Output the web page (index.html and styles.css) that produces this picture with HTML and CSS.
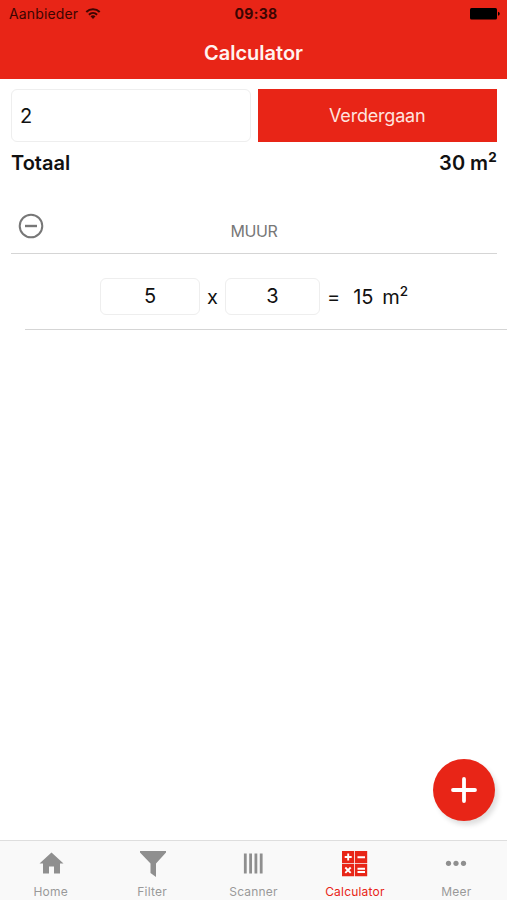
FILE: index.html
```html
<!DOCTYPE html>
<html lang="nl">
<head>
<meta charset="utf-8">
<title>Calculator</title>
<link rel="stylesheet" href="styles.css">
</head>
<body>
<div class="app">
  <header class="header">
    <div class="status">
      <div class="carrier"><span>Aanbieder</span>
        <svg width="16" height="12" viewBox="0 0 16 12" fill="none" stroke="currentColor" stroke-width="2"><path d="M1.300 4C5 .300 11 .300 14.700 4M3.900 6.700C6.300 4.500 9.700 4.500 12.100 6.700"/><path d="M5.500 8.300Q8 6.400 10.500 8.300L8 11Z" fill="currentColor" stroke="none"/></svg>
      </div>
      <span class="time">09:38</span>
      <svg class="battery" width="30" height="12" viewBox="0 0 30 12"><rect width="27" height="11.500" rx="1.500"/><path d="M28 3.700Q29.800 4.200 29.800 5.750T28 7.800Z"/></svg>
    </div>
    <h1 class="title">Calculator</h1>
  </header>
  <main class="content">
    <div class="entry">
      <div class="field name">2</div>
      <button class="button">Verdergaan</button>
    </div>
    <div class="total"><span class="total-label">Totaal</span><span class="total-value">30 m<sup>2</sup></span></div>
    <section class="group">
      <div class="group-head">
        <svg class="minus" width="26" height="26" viewBox="0 0 26 26" fill="none" stroke="#777" stroke-width="2"><circle cx="13" cy="13" r="11.300"/><path d="M7 13h12" stroke-width="2.400"/></svg>
        <span class="group-name">MUUR</span>
      </div>
      <div class="measure">
        <div class="field width">5</div>
        <span class="times">x</span>
        <div class="field height">3</div>
        <span class="equals">=</span>
        <span class="area">15 m<sup>2</sup></span>
      </div>
    </section>
    <button class="fab" aria-label="Toevoegen"><svg width="26" height="26" viewBox="0 0 26 26" stroke="#fff" stroke-width="3.800" stroke-linecap="round"><path d="M13 2v22M2 13h22"/></svg></button>
  </main>
  <nav class="tabs">
    <div class="tab"><svg width="28" height="28" viewBox="0 0 28 28"><path d="M14.500 2.500L26.500 13.500H23V23.500H17V16.500H12V23.500H6V13.500H2.500Z"/></svg><span>Home</span></div>
    <div class="tab"><svg width="28" height="28" viewBox="0 0 28 28"><path d="M2 1H28V2.500L18 13.500V27L12.500 23V13.500L2 2.500Z"/></svg><span>Filter</span></div>
    <div class="tab"><svg width="28" height="28" viewBox="0 0 28 28"><path d="M4.900 3.500h2.800v20H4.900zM10.200 3.500h2.800v20h-2.800zM15.500 3.500h2.800v20h-2.800zM20.800 3.500h2.800v20h-2.800z"/></svg><span>Scanner</span></div>
    <div class="tab active"><svg width="28" height="28" viewBox="0 0 28 28"><path d="M1 1h12.200v12.200H1zM14 1h12.200v12.200H14zM1 14h12.200v12.200H1zM14 14h12.200v12.200H14z"/><path d="M3.700 7h7M7.200 3.500v7M16.500 7.200h7.500M4.300 17.500l5.400 5.400M9.700 17.500l-5.400 5.400M16.500 18.700h7.500M16.500 22h7.500" stroke="#fff" stroke-width="1.900"/></svg><span>Calculator</span></div>
    <div class="tab"><svg width="28" height="28" viewBox="0 0 28 28"><circle cx="6.500" cy="13.300" r="2.600"/><circle cx="14" cy="13.300" r="2.600"/><circle cx="21.500" cy="13.300" r="2.600"/></svg><span>Meer</span></div>
  </nav>
</div>
</body>
</html>
```
FILE: styles.css
```css
* { box-sizing: border-box; }
body { margin: 0; font-family: Inter, "Liberation Sans", sans-serif; color: #111; background: #fff; }
.app { display: flex; flex-direction: column; height: 900px; overflow: hidden; }
.header { height: 79px; background: #e82517; }
.status { display: grid; grid-template-columns: 1fr auto 1fr; align-items: center; height: 27px; padding: 0 7px 0 9px; color: #3c0502; }
.carrier { display: flex; align-items: center; gap: 7px; font-size: 14px; letter-spacing: .15px; }
.time { margin-left: 3px; font-size: 14px; font-weight: 700; letter-spacing: .35px; }
.battery { justify-self: end; fill: #000; }
.title { margin: 0; height: 52px; line-height: 52px; text-align: center; font-size: 20px; font-weight: 600; color: #fff3f0; }
.content { position: relative; flex: 1; padding-top: 10px; }
.entry { display: grid; grid-template-columns: 1fr 1fr; gap: 7px; height: 53px; margin: 0 10px 0 11px; }
.field { border: 1px solid #eee; border-radius: 6px; background: #fff; font-size: 20px; display: flex; align-items: center; justify-content: center; }
.name { justify-content: flex-start; padding-left: 8px; }
.button { border: 0; background: #e82517; color: #ffe3df; font: 400 18px Inter, sans-serif; letter-spacing: -.2px; padding: 0; }
.total { display: flex; justify-content: space-between; margin: 0 10px 0 11px; height: 42px; line-height: 43px; font-size: 20px; font-weight: 600; }
sup { font-size: 13.5px; line-height: 0; vertical-align: 8px; font-weight: 500; }
.total sup { font-weight: 700; }
.total-value { word-spacing: -.5px; letter-spacing: .2px; }
.group-head { display: grid; grid-template-columns: 1fr auto 1fr; margin: 0 10px 0 11px; height: 70px; border-bottom: 1px solid #d5d5d5; }
.minus { margin: 29px 0 0 7px; }
.group-name { padding-top: 36px; line-height: 22px; font-size: 16px; letter-spacing: -.4px; color: #777; }
.measure { display: flex; align-items: center; height: 76px; margin-left: 25px; padding: 10px 0 0 75px; border-bottom: 1px solid #d5d5d5; font-size: 20px; }
.measure .field { height: 37px; padding-bottom: 2px; }
.width { width: 100px; }
.height { width: 95px; }
.times { width: 25px; text-align: center; }
.equals { margin-left: 7px; }
.area { margin-left: 13px; word-spacing: 3px; }
.fab { position: absolute; right: 12px; bottom: 19px; width: 62px; height: 62px; padding: 0; border: 0; border-radius: 50%; background: #e82517; box-shadow: 3px 4px 5px rgba(0,0,0,.13); display: flex; align-items: center; justify-content: center; }
.tabs { display: grid; grid-template-columns: repeat(5, 1fr); height: 60px; border-top: 1px solid #dedede; background: #f9f9f9; }
.tab { display: flex; flex-direction: column; align-items: center; padding-top: 9px; color: #999; font-size: 12px; letter-spacing: .2px; }
.tab svg { fill: #8f8f8f; }
.tab span { margin-top: 6px; line-height: 16px; }
.active { color: #e82517; }
.active svg { fill: #e82517; }
```
